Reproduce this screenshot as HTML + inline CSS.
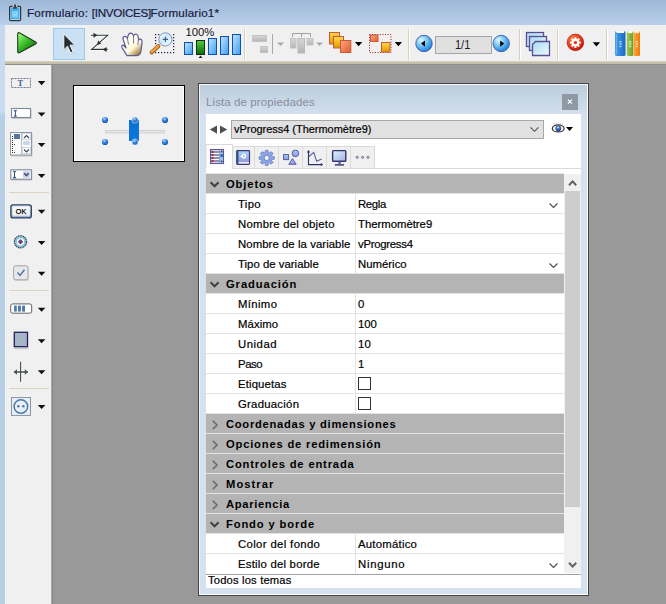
<!DOCTYPE html>
<html><head><meta charset="utf-8">
<style>
*{margin:0;padding:0;box-sizing:border-box}
html,body{width:666px;height:604px;overflow:hidden;background:#999;font-family:"Liberation Sans",sans-serif;position:relative}
.a{position:absolute}
.lbl,.val,#status,#combotext,#ttext{-webkit-text-stroke:0.2px currentColor}
svg{position:absolute;overflow:visible}
#title{left:0;top:0;width:666px;height:25px;background:linear-gradient(#9db7d6,#b9cfe9)}
#ttext{left:27px;top:6px;letter-spacing:0.05px;font-size:11.65px;color:#1a1a40;white-space:nowrap;line-height:14px}
#lstrip{left:0;top:25px;width:5px;height:579px;background:linear-gradient(#c4d8ee,#cadcf0 85px,#b8cfe8 92px,#b8cfe8)}
#tb{left:5px;top:25px;width:661px;height:36px;background:#f0f0f0}
#sepband{left:5px;top:61px;width:661px;height:4px;background:linear-gradient(#d6d2c0 0,#d6d2c0 1px,#c6c2ae 1px,#c0bca8 3px,#8e8e86 3px)}
#lpanel{left:5px;top:65px;width:46px;height:539px;background:#f0f0f0}
#ledge1{left:51px;top:65px;width:1px;height:539px;background:#aaa}
#ledge2{left:52px;top:65px;width:1px;height:539px;background:#888}
.vsep{width:2px;height:31px;top:29px;background:linear-gradient(90deg,#d9d1b9 50%,#fff 50%)}
.hsep{left:9px;width:40px;height:1px;background:#ddd6c0}
.dd{width:0;height:0;border-left:4px solid transparent;border-right:4px solid transparent;border-top:4px solid #000}
#form{left:73px;top:85px;width:112px;height:77px;border:1px solid #000;background:#f0f0f0;box-shadow:inset 0 0 0 1px #fff}
#win{left:198px;top:83px;width:391px;height:513px;border:1px solid #444;background:#d3e0ef}
#winin{left:199px;top:84px;width:389px;height:511px;border:1px solid #f4f7fb;border-right-color:#fff;border-bottom-color:#fff;background:linear-gradient(#bccddc,#d4e1ef 31px,#d4e1ef)}
#wtitle{left:206px;top:95px;letter-spacing:0.08px;font-size:11.55px;color:#8a8d9c;white-space:nowrap;line-height:14px}
#close{left:562px;top:94px;width:16px;height:16px;background:#8e99a4}
#content{left:206px;top:114px;width:375px;height:474px;background:#fff}
#combo{left:231px;top:120px;width:313px;height:19px;border:1px solid #a6a6a6;background:#e1e1e1}
#combotext{left:234px;top:122px;font-size:10.95px;color:#000;white-space:nowrap;line-height:14px}
.tab{top:146px;width:24px;height:23px;background:#f0f0f0;border:1px solid #dadada;border-bottom:none;border-left:none}
.row{left:206px;width:358px;height:20px;border-top:1px solid #e3e3e3;background:#fff}
.hdr{background:#b4b4b4}
.lbl{position:absolute;left:32px;top:3px;font-size:11.35px;color:#000;white-space:nowrap;line-height:14px}
.val{position:absolute;left:152px;top:3px;font-size:11.35px;color:#000;white-space:nowrap;line-height:14px}
.htxt{position:absolute;left:20px;top:3px;letter-spacing:0.68px;font-size:11.2px;font-weight:bold;color:#000;white-space:nowrap;line-height:14px}
.div{position:absolute;left:149px;top:-1px;width:1px;height:20px;background:#e3e3e3}
.cb{position:absolute;left:152px;top:3px;width:13px;height:13px;border:1px solid #333;background:#fff}
#sb{left:564px;top:174px;width:17px;height:399px;background:#f0f0f0}
#thumb{left:565px;top:191px;width:15px;height:316px;background:#cdcdcd}
#botline{left:206px;top:574px;width:375px;height:1px;background:#a0a0a0}
#status{left:208px;top:573px;letter-spacing:0.18px;font-size:11.2px;color:#000;white-space:nowrap;line-height:14px}
</style></head><body>
<div class="a" id="title"></div>
<div class="a" id="ttext"><span class="a" id="tt1" style="left:0px;letter-spacing:0.2px">Formulario:</span><span class="a" id="tt2" style="left:64.8px;letter-spacing:-0.3px">[INVOICES]</span><span class="a" id="tt3" style="left:123.4px;letter-spacing:0.18px">Formulario1*</span></div>
<div class="a" id="lstrip"></div>
<div class="a" id="tb"></div>
<div class="a" id="sepband"></div>
<!--TOOLBAR-->
<svg width="666" height="65" style="left:0;top:0">
<defs>
<linearGradient id="gPlay" x1="0" y1="0.1" x2="0.7" y2="1"><stop offset="0" stop-color="#9cff70"/><stop offset="0.5" stop-color="#3cbc2c"/><stop offset="1" stop-color="#0e6410"/></linearGradient>
<linearGradient id="gBar" x1="0" y1="0" x2="1" y2="1"><stop offset="0" stop-color="#c4e6ff"/><stop offset="1" stop-color="#3a9ef0"/></linearGradient>
<linearGradient id="gGreen" x1="0" y1="0" x2="0" y2="1"><stop offset="0" stop-color="#50d040"/><stop offset="1" stop-color="#0a6a0a"/></linearGradient>
<linearGradient id="gGray" x1="0" y1="0" x2="0" y2="1"><stop offset="0" stop-color="#d8d8d8"/><stop offset="1" stop-color="#b4b4b4"/></linearGradient>
<linearGradient id="gYel" x1="0" y1="0" x2="0" y2="1"><stop offset="0" stop-color="#ffd84a"/><stop offset="1" stop-color="#e09a00"/></linearGradient>
<linearGradient id="gOra" x1="0" y1="0" x2="1" y2="1"><stop offset="0" stop-color="#ffa880"/><stop offset="1" stop-color="#e05a30"/></linearGradient>
<radialGradient id="gNav" cx="0.35" cy="0.3" r="0.75"><stop offset="0" stop-color="#e6f8ff"/><stop offset="0.5" stop-color="#6cc0f0"/><stop offset="1" stop-color="#1a78d8"/></radialGradient>
<radialGradient id="gRed" cx="0.35" cy="0.3" r="0.8"><stop offset="0" stop-color="#ff8040"/><stop offset="0.6" stop-color="#e03a1a"/><stop offset="1" stop-color="#b80808"/></radialGradient>
<linearGradient id="gPage" x1="0" y1="0" x2="1" y2="1"><stop offset="0" stop-color="#a8d8f4"/><stop offset="1" stop-color="#effaff"/></linearGradient>
<linearGradient id="gLens" x1="0" y1="0" x2="1" y2="1"><stop offset="0" stop-color="#ffffff"/><stop offset="0.4" stop-color="#c4ecfc"/><stop offset="1" stop-color="#f0fbff"/></linearGradient>
<linearGradient id="gHand" x1="0.3" y1="0.3" x2="0.85" y2="1"><stop offset="0" stop-color="#fffeee"/><stop offset="0.5" stop-color="#fff8dc"/><stop offset="1" stop-color="#946818"/></linearGradient>
<linearGradient id="gBlueBook" x1="0" y1="0" x2="1" y2="0"><stop offset="0" stop-color="#4aa0ea"/><stop offset="1" stop-color="#1868c4"/></linearGradient>
</defs>
<!-- title icon -->
<g>
<path d="M12.6 6.3 H10.6 Q9.6 6.3 9.6 7.3 V19.6 Q9.6 20.6 10.6 20.6 H19.6 Q20.6 20.6 20.6 19.6 V7.3 Q20.6 6.3 19.6 6.3 H17.4" fill="none" stroke="#363636" stroke-width="1.2"/>
<rect x="10.8" y="8" width="8.4" height="11" fill="#41b2ee"/>
<rect x="12" y="11" width="6" height="6.5" fill="#78cff7"/>
<path d="M13 14.5 L14.5 16 L17.5 12.5" fill="none" stroke="#c8ecff" stroke-width="0.9" stroke-dasharray="1 0.6"/>
<rect x="14.2" y="4.5" width="1.8" height="3" fill="#363636"/>
<rect x="13" y="7.2" width="4.2" height="1.4" fill="#363636"/>
</g>
<!-- play -->
<path d="M17.7 34.2 Q17.7 31.9 19.8 33 L35.6 41.9 Q37.3 42.9 35.6 43.9 L19.8 52.6 Q17.7 53.7 17.7 51.4 Z" fill="url(#gPlay)" stroke="#1c3c1c" stroke-width="1.1" stroke-linejoin="round"/>
<!-- selected button -->
<rect x="53.5" y="28.5" width="31" height="31" fill="#c9e0f5" stroke="#9ccaf2" stroke-width="1"/>
<!-- arrow cursor -->
<path d="M64.6 35 L64.6 50.8 L68.2 47.2 L71.2 53.8 L73.6 52.8 L70.6 46.2 L75.4 46.2 Z" fill="#9aa8b4" opacity="0.6"/><path d="M63.8 34 L63.8 49.8 L67.5 46.2 L70.5 52.8 L73 51.7 L70 45.2 L74.8 45.2 Z" fill="#262c30" stroke="#f8f8f8" stroke-width="1" stroke-linejoin="round"/>
<!-- Z icon -->
<g stroke="#ffffff" stroke-width="2.6" fill="none" opacity="0.9">
<path d="M91 35.3 H107.6 L91.6 49.4 H107.6"/>
</g>
<g fill="none" stroke="#2b3434" stroke-width="1.1">
<path d="M91 35.3 H107.6 L91.6 49.4 H107.6"/>
</g>
<g fill="#2b3434">
<path d="M93.5 32.8 L97.5 35.3 L93.5 37.8 Z"/>
<path d="M106.6 46.9 L102.6 49.4 L106.6 51.9 Z"/>
<path d="M96.8 45.2 L98.2 40.6 L101.3 43.6 Z"/>
</g>
<!-- hand -->
<path d="M127 55.6 L122 47.6 Q121 45.2 123.4 45.2 L126 48 L123 39 Q122.6 36.3 125.2 36.4 Q126.6 36.6 127.4 38.4 L128.2 35.2 Q129 33 131 33.2 Q132.8 33.4 133.2 35.4 L133.8 35.4 Q134.6 33.8 136.4 34.2 Q138.2 34.8 138.2 37 L138.6 40 Q139.6 38.8 141 39.4 Q142.3 40 142 42.5 L141 51 Q140.4 55.6 137 55.6 Z" fill="url(#gHand)" stroke="#5c5c9c" stroke-width="1.2" stroke-linejoin="round"/>
<path d="M127.4 38.6 L128.6 44.6 M133.5 35.6 L133.6 43.6 M138.4 39.8 L137.8 45" fill="none" stroke="#6a68a8" stroke-width="0.9"/>
<!-- zoom -->
<g fill="#1a1a50">
<rect x="155" y="34" width="1.2" height="1.2"/><rect x="158" y="34" width="1.2" height="1.2"/><rect x="173" y="34" width="1.2" height="1.2"/>
<rect x="155" y="37" width="1.2" height="1.2"/><rect x="155" y="40" width="1.2" height="1.2"/><rect x="155" y="43" width="1.2" height="1.2"/>
<rect x="155" y="52" width="1.2" height="1.2"/><rect x="158" y="52" width="1.2" height="1.2"/><rect x="161" y="52" width="1.2" height="1.2"/><rect x="164" y="52" width="1.2" height="1.2"/><rect x="167" y="52" width="1.2" height="1.2"/><rect x="170" y="52" width="1.2" height="1.2"/><rect x="173" y="52" width="1.2" height="1.2"/>
<rect x="173" y="37" width="1.2" height="1.2"/><rect x="173" y="40" width="1.2" height="1.2"/><rect x="173" y="43" width="1.2" height="1.2"/><rect x="173" y="46" width="1.2" height="1.2"/><rect x="173" y="49" width="1.2" height="1.2"/>
</g>
<path d="M151.5 52.5 L158.5 46" stroke="#7a5020" stroke-width="3.8" stroke-linecap="round"/>
<path d="M151.5 52.2 L158.3 46" stroke="#f5a030" stroke-width="2.6" stroke-linecap="round"/>
<circle cx="165.4" cy="39.4" r="6.6" fill="url(#gLens)" stroke="#8a8ec4" stroke-width="1"/>
<path d="M162.8 39.4 H168 M165.4 36.8 V42" stroke="#505084" stroke-width="1.1"/>
<!-- 100% -->
<text x="185.5" y="36" font-family="Liberation Sans" font-size="11.3" fill="#111">100%</text>
<g stroke="#0c50b0" stroke-width="1">
<rect x="184.5" y="42.5" width="8" height="12" fill="url(#gBar)"/>
<rect x="208.5" y="38.5" width="8" height="16" fill="url(#gBar)"/>
<rect x="220.5" y="36.5" width="8" height="18" fill="url(#gBar)"/>
<rect x="232.5" y="34.5" width="8" height="20" fill="url(#gBar)"/>
</g>
<rect x="196.5" y="40.5" width="8" height="14" fill="url(#gGreen)" stroke="#1a2a1a" stroke-width="1"/>
<path d="M198.5 58 L200.5 55.5 L202.5 58 Z" fill="#222"/>
<!-- separators -->
<rect x="244" y="29" width="1" height="31" fill="#d8d0b8"/><rect x="245" y="29" width="1" height="31" fill="#fff"/>
<rect x="408" y="29" width="1" height="31" fill="#d8d0b8"/><rect x="409" y="29" width="1" height="31" fill="#fff"/>
<rect x="519" y="29" width="1" height="31" fill="#d8d0b8"/><rect x="520" y="29" width="1" height="31" fill="#fff"/>
<rect x="557" y="29" width="1" height="31" fill="#d8d0b8"/><rect x="558" y="29" width="1" height="31" fill="#fff"/>
<rect x="606" y="29" width="1" height="31" fill="#d8d0b8"/><rect x="607" y="29" width="1" height="31" fill="#fff"/>
<!-- align (disabled) -->
<rect x="252.5" y="35.5" width="14" height="6" fill="url(#gGray)" stroke="#c4c4c4"/>
<rect x="260.5" y="46.5" width="7" height="6" fill="url(#gGray)" stroke="#c4c4c4"/>
<rect x="272" y="34" width="1" height="20" fill="#a8a8a8"/>
<path d="M277 42.5 H284 L280.5 46 Z" fill="#a8a8a8"/>
<path d="M292.5 37 V33.5 H310.5 V37 M301.5 33.5 V37" fill="none" stroke="#a0a0a0" stroke-width="1"/>
<rect x="290.5" y="38.5" width="5.5" height="9.5" fill="url(#gGray)" stroke="#c4c4c4"/>
<rect x="298" y="38.5" width="6.5" height="14.5" fill="url(#gGray)" stroke="#b8b8b8"/>
<rect x="307" y="38.5" width="6" height="6.5" fill="url(#gGray)" stroke="#c4c4c4"/>
<path d="M316 42.5 H323 L319.5 46 Z" fill="#a8a8a8"/>
<!-- layers -->
<rect x="329.5" y="32.5" width="10" height="11.5" fill="url(#gYel)" stroke="#c85a3a"/>
<rect x="333.5" y="36.5" width="10" height="11.5" fill="url(#gYel)" stroke="#c85a3a"/>
<rect x="340.5" y="40.5" width="10.3" height="12" fill="url(#gOra)" stroke="#c85a3a"/>
<path d="M355 42 H362.3 L358.65 46.2 Z" fill="#000"/>
<rect x="369.5" y="34.5" width="21.5" height="18" fill="none" stroke="#a01818" stroke-width="1" stroke-dasharray="1 1.6"/>
<rect x="370.5" y="35" width="7.5" height="6.5" fill="url(#gOra)" stroke="#c85a3a"/>
<rect x="381.5" y="42.5" width="8.5" height="9.5" fill="url(#gYel)" stroke="#c85a3a"/>
<path d="M394.8 42 H402 L398.4 46.2 Z" fill="#000"/>
<!-- nav -->
<circle cx="424" cy="43.5" r="8.2" fill="url(#gNav)" stroke="#3a5aa8" stroke-width="0.9"/>
<path d="M421 43.6 L425 40.5 L425 46.7 Z" fill="#000"/>
<rect x="435.5" y="36.5" width="56" height="17" fill="#e0e0e0" stroke="#a6a6a6"/>
<text x="455" y="49.2" font-family="Liberation Sans" font-size="13.2" fill="#1a1a2a" textLength="15.3" lengthAdjust="spacingAndGlyphs">1/1</text>
<circle cx="501.2" cy="43.5" r="8.2" fill="url(#gNav)" stroke="#3a5aa8" stroke-width="0.9"/>
<path d="M504.2 43.6 L500.2 40.5 L500.2 46.7 Z" fill="#000"/>
<!-- pages -->
<g stroke="#5a4e90" stroke-width="1.3" fill="url(#gPage)">
<rect x="526.5" y="32.5" width="17" height="14"/>
<rect x="529.5" y="36.5" width="17" height="14"/>
<path d="M532.5 44.5 L535.5 41.5 H549.5 V55.5 H532.5 Z"/>
</g>
<!-- red gear -->
<circle cx="575.4" cy="42.4" r="8.3" fill="url(#gRed)" stroke="#a80a0a" stroke-width="0.6"/>
<g fill="#fff" transform="translate(575.4 42.6)">
<circle r="3.8"/>
<rect x="-1" y="-5.4" width="2" height="10.8"/>
<rect x="-1" y="-5.4" width="2" height="10.8" transform="rotate(45)"/>
<rect x="-1" y="-5.4" width="2" height="10.8" transform="rotate(90)"/>
<rect x="-1" y="-5.4" width="2" height="10.8" transform="rotate(135)"/>
</g>
<circle cx="575.4" cy="42.6" r="1.7" fill="#e03a1a"/>
<path d="M592.7 42.3 H600.1 L596.4 46.6 Z" fill="#000"/>
<!-- books -->
<linearGradient id="gGrnBook" x1="0" y1="0" x2="1" y2="0"><stop offset="0" stop-color="#9ccc50"/><stop offset="1" stop-color="#6a9e28"/></linearGradient>
<linearGradient id="gOrBook" x1="0" y1="0" x2="1" y2="0"><stop offset="0" stop-color="#ffa838"/><stop offset="1" stop-color="#ee7a08"/></linearGradient>
<path d="M615 33 L615.8 31 L617.5 33 H623 L624.7 31 L625.5 33 V54.5 Q625.5 56 624 56 H616.5 Q615 56 615 54.5 Z" fill="url(#gBlueBook)"/>
<rect x="616.6" y="31" width="7.4" height="2" fill="#f4f8ff"/>
<path d="M616.5 34 V54" stroke="#8cc8ff" stroke-width="0.8" opacity="0.7"/>
<rect x="619.3" y="41" width="2.4" height="1.4" fill="#a8d0f4"/><rect x="619.3" y="43.4" width="2.4" height="1.4" fill="#a8d0f4"/><rect x="619.3" y="45.8" width="2.4" height="1.4" fill="#a8d0f4"/>
<path d="M626.8 33 L627.4 31 L628.6 33 H631.6 L632.8 31 L633.3 33 V55 Q633.3 56 632 56 H628 Q626.8 56 626.8 55 Z" fill="url(#gGrnBook)"/>
<rect x="628" y="31" width="4.4" height="2.2" fill="#f6ffe8"/>
<rect x="629" y="41" width="2.4" height="1.4" fill="#d0ecb0"/><rect x="629" y="43.4" width="2.4" height="1.4" fill="#d0ecb0"/><rect x="629" y="45.8" width="2.4" height="1.4" fill="#d0ecb0"/>
<path d="M633.5 33 L634.1 31 L635.3 33 H638.4 L639.5 31 L640 33 V55 Q640 56 638.8 56 H634.8 Q633.5 56 633.5 55 Z" fill="url(#gOrBook)"/>
<rect x="634.7" y="31" width="4.4" height="2.2" fill="#fff4e0"/>
<rect x="635.6" y="41" width="2.4" height="1.4" fill="#ffd0a0"/><rect x="635.6" y="43.4" width="2.4" height="1.4" fill="#ffd0a0"/><rect x="635.6" y="45.8" width="2.4" height="1.4" fill="#ffd0a0"/>
</svg>
<!--/TOOLBAR-->
<div class="a" id="lpanel"></div>
<div class="a" id="ledge1"></div>
<div class="a" id="ledge2"></div>
<!--LEFT-->
<svg width="60" height="430" style="left:0;top:0">
<defs>
<linearGradient id="gOK" x1="0" y1="0" x2="0" y2="1"><stop offset="0" stop-color="#dfe8f6"/><stop offset="1" stop-color="#9eb0d0"/></linearGradient>
</defs>
<!-- arrows -->
<g fill="#111">
<path d="M37.8 81 H45.4 L41.6 85.2 Z"/>
<path d="M37.8 112.5 H45.4 L41.6 116.5 Z"/>
<path d="M37.8 143 H45.4 L41.6 147 Z"/>
<path d="M37.8 174 H45.4 L41.6 178 Z"/>
<path d="M37.8 209.7 H45.4 L41.6 213.7 Z"/>
<path d="M37.8 241 H45.4 L41.6 245 Z"/>
<path d="M37.8 271.8 H45.4 L41.6 275.8 Z"/>
<path d="M37.8 307.7 H45.4 L41.6 311.7 Z"/>
<path d="M37.8 339.3 H45.4 L41.6 343.3 Z"/>
<path d="M37.8 370.2 H45.4 L41.6 374.2 Z"/>
<path d="M37.8 405 H45.4 L41.6 409 Z"/>
</g>
<!-- separators -->
<rect x="9" y="192" width="40" height="1" fill="#dcd4bf"/>
<rect x="9" y="290" width="40" height="1" fill="#dcd4bf"/>
<rect x="9" y="388" width="40" height="1" fill="#dcd4bf"/>
<!-- T icon -->
<rect x="11.5" y="78.5" width="19" height="9" fill="none" stroke="#6e7a8c" stroke-width="1" stroke-dasharray="2 1"/>
<text x="17.6" y="85.8" font-family="Liberation Serif" font-weight="bold" font-size="8.4" fill="#4a5c90">T</text>
<!-- input -->
<rect x="12" y="109.5" width="19.5" height="9.5" fill="#c8c8c8"/><rect x="11.5" y="108.5" width="19" height="9" fill="#fff" stroke="#7d8a9a" stroke-width="1.1"/>
<path d="M14 110.4 Q15.4 110.4 15.4 111.4 V115.2 Q15.4 116.2 14 116.2 M16.8 110.4 Q15.4 110.4 15.4 111.4 M16.8 116.2 Q15.4 116.2 15.4 115.2" fill="none" stroke="#3d5a98" stroke-width="1.1"/>
<!-- list -->
<rect x="11" y="133.5" width="21.5" height="23" fill="#c4c4c4"/><rect x="10.5" y="132.5" width="21" height="22.5" fill="#fafafa" stroke="#8a98a8" stroke-width="1"/>
<rect x="21" y="133" width="1" height="22" fill="#b8c0cc"/>
<rect x="14" y="134" width="6" height="5" fill="#5a74a0"/>
<g fill="#333"><rect x="12" y="136" width="1" height="1"/><rect x="12" y="138" width="1" height="1"/><rect x="12" y="140" width="1" height="1"/><rect x="12" y="142" width="1" height="1"/><rect x="12" y="144" width="1" height="1"/><rect x="14" y="144" width="1" height="1"/><rect x="12" y="146" width="1" height="1"/><rect x="12" y="148" width="1" height="1"/><rect x="12" y="150" width="1" height="1"/><rect x="12" y="152" width="1" height="1"/><rect x="14" y="152" width="1" height="1"/></g>
<rect x="22.5" y="133.5" width="8" height="6" fill="#fff" stroke="#c8d0e0" stroke-width="0.8"/>
<path d="M24 138 L26.5 135.5 L29 138" fill="none" stroke="#404858" stroke-width="1.2"/>
<rect x="23" y="141" width="7" height="4" rx="1.5" fill="#c8d4ea"/>
<rect x="22.5" y="147.5" width="8" height="6" fill="#fff" stroke="#c8d0e0" stroke-width="0.8"/>
<path d="M24 149.5 L26.5 152 L29 149.5" fill="none" stroke="#404858" stroke-width="1.2"/>
<!-- combo -->
<rect x="11.3" y="170.8" width="21" height="9.8" fill="#c8c8c8"/><rect x="10.8" y="169.8" width="20.6" height="9.4" fill="#fff" stroke="#7d8a9a" stroke-width="1.1"/>
<path d="M12.9 171.3 Q14.5 171.3 14.5 172.6 V176.5 Q14.5 177.8 12.9 177.8 M16.1 171.3 Q14.5 171.3 14.5 172.6 M16.1 177.8 Q14.5 177.8 14.5 176.5" fill="none" stroke="#3d5080" stroke-width="1.1"/>
<rect x="23" y="171.3" width="6.8" height="6.4" rx="1" fill="#c6cfe6"/>
<path d="M24.2 173.2 L26.4 175.6 L28.6 173.2" fill="none" stroke="#303c60" stroke-width="1.3"/>
<!-- OK -->
<rect x="10.9" y="204.9" width="20.4" height="13" rx="2.2" fill="url(#gOK)" stroke="#26405e" stroke-width="1.3"/>
<rect x="12.6" y="206.6" width="17" height="9" fill="#f8f8f8"/>
<text x="15.8" y="214" font-family="Liberation Sans" font-size="7.2" fill="#000" stroke="#000" stroke-width="0.25">OK</text>
<!-- radio -->
<circle cx="20.5" cy="241.8" r="6.1" fill="#88c4d6" stroke="#2a3e50" stroke-width="1.2" stroke-dasharray="1.2 0.6"/>
<circle cx="20.5" cy="241.8" r="3.6" fill="#fff"/>
<path d="M20.5 239.1 L23.2 241.8 L20.5 244.5 L17.8 241.8 Z" fill="#6c3c90"/>
<!-- checkbox -->
<rect x="14.2" y="266.8" width="14.4" height="14" rx="1.8" fill="#cfcfcf"/><rect x="13.6" y="265.8" width="14.4" height="14" rx="1.8" fill="#e8e8e8" stroke="#a4a4a4" stroke-width="1"/>
<path d="M17.5 272.5 L20 275.5 L24.5 269.8" fill="none" stroke="#4a72a4" stroke-width="1.4"/>
<!-- progress -->
<rect x="10.7" y="303.9" width="21" height="9.3" rx="2" fill="#fff" stroke="#606060" stroke-width="1"/>
<rect x="14.1" y="305.6" width="2.7" height="6" fill="#4a7aa8"/>
<rect x="18" y="305.6" width="2.9" height="6" fill="#4a7aa8"/>
<rect x="22.1" y="305.6" width="2.9" height="6" fill="#4a7aa8"/>
<!-- rect -->
<rect x="14.4" y="348" width="14" height="1.2" fill="#c8c8c8"/>
<rect x="14.3" y="332.3" width="13.2" height="14.4" fill="#a8b4c8" stroke="#20205a" stroke-width="1.3"/>
<!-- splitter -->
<path d="M14 372 H27.8" stroke="#fff" stroke-width="3.2"/>
<rect x="20" y="361.8" width="1.1" height="20" fill="#4a5454"/>
<path d="M14 372 H27.8" stroke="#4a5454" stroke-width="1.6"/>
<path d="M13.6 372 L17 369.2 L17 374.8 Z M28.2 372 L24.8 369.2 L24.8 374.8 Z" fill="#4a5454"/>
<!-- plugin -->
<rect x="11.5" y="397.5" width="19" height="18" fill="#e8eef4" stroke="#8898a8" stroke-width="1"/>
<circle cx="20.9" cy="406.5" r="6.8" fill="none" stroke="#4a78a8" stroke-width="1.5"/>
<circle cx="18.4" cy="406.3" r="1.2" fill="#4a78a8"/>
<circle cx="23.4" cy="406.3" r="1.2" fill="#4a78a8"/>
</svg>
<!--/LEFT-->

<!-- form preview -->
<div class="a" id="form"></div>
<!--FORM-->
<svg width="120" height="80" style="left:70px;top:84px">
<defs>
<radialGradient id="gDot" cx="0.4" cy="0.3" r="0.7"><stop offset="0" stop-color="#b8dcff"/><stop offset="0.45" stop-color="#3a88e0"/><stop offset="1" stop-color="#1050b0"/></radialGradient>
</defs>
<g transform="translate(-70 -84)">
<rect x="105.5" y="130.5" width="59" height="2.4" fill="#e6e6e6" stroke="#d0d0d0" stroke-width="1"/>
<rect x="129" y="120" width="10" height="21" fill="#0a74d8"/>
<g fill="url(#gDot)">
<circle cx="105" cy="120" r="3.1"/><circle cx="135" cy="120" r="3.1" stroke="#e0ecf8" stroke-width="0.6"/><circle cx="165" cy="120" r="3.1"/>
<circle cx="105" cy="142" r="3.1"/><circle cx="135" cy="142" r="3.1" stroke="#e0ecf8" stroke-width="0.6"/><circle cx="165" cy="142" r="3.1"/>
</g>
</g>
</svg>
<!--/FORM-->

<!-- properties window -->
<div class="a" id="win"></div>
<div class="a" id="winin"></div>
<div class="a" id="wtitle">Lista de propiedades</div>
<div class="a" id="close"></div>
<div class="a" id="content"></div>
<div class="a" id="combo"></div>
<!--WIN-->
<svg width="666" height="604" style="left:0;top:0">
<defs>
<linearGradient id="gBook" x1="0" y1="0" x2="0" y2="1"><stop offset="0" stop-color="#a4d6ff"/><stop offset="1" stop-color="#9090d0"/></linearGradient>
<linearGradient id="gScr" x1="0" y1="0" x2="1" y2="1"><stop offset="0" stop-color="#d8f4ff"/><stop offset="1" stop-color="#a8b0e0"/></linearGradient>
<linearGradient id="gShape" x1="0" y1="0" x2="0" y2="1"><stop offset="0" stop-color="#a8d0ff"/><stop offset="1" stop-color="#8898e0"/></linearGradient>
<radialGradient id="gIris" cx="0.45" cy="0.35" r="0.6"><stop offset="0" stop-color="#6aaaf0"/><stop offset="1" stop-color="#0a3a98"/></radialGradient>
</defs>
<!-- nav arrows -->
<path d="M209.8 129.6 L217 125.4 V133.8 Z" fill="#505050"/>
<path d="M227.2 129.6 L220 125.4 V133.8 Z" fill="#505050"/>
<!-- combo chevron -->
<path d="M530.5 127.3 L534.5 131.3 L538.5 127.3" fill="none" stroke="#505050" stroke-width="1.1"/>
<!-- close x -->
<path d="M567.9 99.6 L571.9 103.6 M571.9 99.6 L567.9 103.6" stroke="#fff" stroke-width="1.2"/>
<!-- eye -->
<g stroke="#c4c4cc" stroke-width="0.7"><path d="M554.6 125 L554 123 M556.4 124.4 L556.1 122.4 M558.3 124.2 V122.2 M560.2 124.4 L560.5 122.4 M562 125 L562.6 123"/></g>
<ellipse cx="558.2" cy="128.4" rx="5.9" ry="3.5" fill="#f8f0e0" stroke="#34343e" stroke-width="1.2"/>
<circle cx="558.3" cy="128.4" r="2.8" fill="url(#gIris)"/>
<circle cx="558.1" cy="127.5" r="0.7" fill="#fff"/>
<path d="M566 127 H573 L569.5 131 Z" fill="#000"/>
<!-- tabs -->
<rect x="232.5" y="146.5" width="22" height="22" fill="#f0f0f0" stroke="#dadada"/>
<rect x="254.5" y="146.5" width="24" height="22" fill="#f0f0f0" stroke="#dadada"/>
<rect x="278.5" y="146.5" width="24" height="22" fill="#f0f0f0" stroke="#dadada"/>
<rect x="302.5" y="146.5" width="24" height="22" fill="#f0f0f0" stroke="#dadada"/>
<rect x="326.5" y="146.5" width="24" height="22" fill="#f0f0f0" stroke="#dadada"/>
<rect x="350.5" y="146.5" width="24" height="22" fill="#f0f0f0" stroke="#dadada"/>
<rect x="374" y="168" width="207" height="1" fill="#dadada"/>
<path d="M206 169 V144.5 H232.5 V169" fill="#fff" stroke="#dadada"/>
<rect x="206" y="168" width="26" height="2" fill="#fff"/>
<!-- list icon -->
<rect x="210.6" y="149.6" width="12.8" height="13.8" fill="#fff" stroke="#5a5a98" stroke-width="1.3"/>
<g fill="#5e5e9c"><rect x="211" y="151.3" width="9" height="1.4"/><rect x="211" y="154.3" width="9" height="1.4"/><rect x="211" y="157.3" width="9" height="1.4"/><rect x="211" y="160.3" width="9" height="1.4"/></g>
<rect x="219.8" y="150.2" width="3.2" height="12.6" fill="#a8c4f0"/>
<rect x="219.4" y="150" width="0.9" height="13" fill="#8a9aa8"/>
<rect x="220.4" y="154.2" width="2.6" height="2.8" fill="#2a6ab8"/>
<path d="M220.3 152.2 L221.7 150.5 L223.1 152.2 Z M220.3 160.8 L221.7 162.5 L223.1 160.8 Z" fill="#2a2a6a"/>
<g fill="#c41010"><circle cx="212.6" cy="152" r="1"/><circle cx="212.6" cy="155" r="1"/><circle cx="212.6" cy="158" r="1"/><circle cx="212.6" cy="161" r="1"/></g>
<!-- book -->
<rect x="236.8" y="150.7" width="12.7" height="13.7" rx="0.8" fill="url(#gBook)" stroke="#3a3a78" stroke-width="1.2"/>
<rect x="236.3" y="151" width="2.2" height="13.2" fill="#3a5286"/>
<rect x="238.6" y="162.2" width="10.4" height="1.3" fill="#fff"/>
<path d="M240.4 156.4 H242.3" stroke="#fff" stroke-width="1.3"/>
<ellipse cx="243.9" cy="156.1" rx="1.5" ry="2" fill="none" stroke="#fff" stroke-width="1.4"/>
<!-- gear -->
<g transform="translate(266.7 157.9)">
<g fill="#8aa4e4" stroke="#6674bc" stroke-width="0.8"><rect x="-1.5" y="-7.6" width="3" height="4" rx="0.6" transform="rotate(0)"/><rect x="-1.5" y="-7.6" width="3" height="4" rx="0.6" transform="rotate(45)"/><rect x="-1.5" y="-7.6" width="3" height="4" rx="0.6" transform="rotate(90)"/><rect x="-1.5" y="-7.6" width="3" height="4" rx="0.6" transform="rotate(135)"/><rect x="-1.5" y="-7.6" width="3" height="4" rx="0.6" transform="rotate(180)"/><rect x="-1.5" y="-7.6" width="3" height="4" rx="0.6" transform="rotate(225)"/><rect x="-1.5" y="-7.6" width="3" height="4" rx="0.6" transform="rotate(270)"/><rect x="-1.5" y="-7.6" width="3" height="4" rx="0.6" transform="rotate(315)"/></g>
<circle r="5.4" fill="#8aa4e4" stroke="#6674bc" stroke-width="0.6"/>
<g fill="#8aa4e4"><rect x="-1.5" y="-6.8" width="3" height="3" rx="0.6" transform="rotate(0)"/><rect x="-1.5" y="-6.8" width="3" height="3" rx="0.6" transform="rotate(45)"/><rect x="-1.5" y="-6.8" width="3" height="3" rx="0.6" transform="rotate(90)"/><rect x="-1.5" y="-6.8" width="3" height="3" rx="0.6" transform="rotate(135)"/><rect x="-1.5" y="-6.8" width="3" height="3" rx="0.6" transform="rotate(180)"/><rect x="-1.5" y="-6.8" width="3" height="3" rx="0.6" transform="rotate(225)"/><rect x="-1.5" y="-6.8" width="3" height="3" rx="0.6" transform="rotate(270)"/><rect x="-1.5" y="-6.8" width="3" height="3" rx="0.6" transform="rotate(315)"/></g>
<circle r="2.6" fill="#f6f6f6" stroke="#6674bc" stroke-width="0.9"/>
</g>
<!-- shapes -->
<g fill="url(#gShape)" stroke="#5a5aa0" stroke-width="1">
<rect x="283.6" y="154.6" width="5" height="5"/>
<circle cx="295.4" cy="153.4" r="3.3"/>
<path d="M292.5 158.6 L296.2 164.3 H288.8 Z"/>
</g>
<!-- chart -->
<g stroke="#2e2e6e" stroke-width="1.1" fill="none"><path d="M308.5 151 V164.6 H322"/></g>
<path d="M306.8 152.5 L308.5 150 L310.2 152.5 Z M320.8 162.9 L323.2 164.6 L320.8 166.3 Z" fill="#2e2e6e"/>
<path d="M309 156.5 L313.8 152.4 L316.6 161.3 L321.6 159" fill="none" stroke="#5a5a9a" stroke-width="1.1"/>
<!-- monitor -->
<rect x="332.6" y="150.6" width="13.2" height="10.6" rx="0.8" fill="url(#gScr)" stroke="#34346e" stroke-width="1.4"/>
<rect x="338.4" y="161.6" width="2.4" height="2.6" fill="#5a6aa8"/>
<rect x="334.8" y="164.2" width="9.2" height="1.4" fill="#34346e"/>
<!-- dots -->
<g fill="#c8c8d8" stroke="#606080" stroke-width="0.8"><circle cx="357.2" cy="157.3" r="1.1"/><circle cx="362.6" cy="157.3" r="1.1"/><circle cx="368" cy="157.3" r="1.1"/></g>
</svg>
<!--/WIN-->
<div class="a" id="combotext">vProgress4 (Thermomètre9)</div>

<div class="a row hdr" style="top:173px"><svg width="10" height="10" style="left:4px;top:7px"><path d="M0.6 1.3 L4.6 5.3 L8.6 1.3" fill="none" stroke="#404040" stroke-width="2"/></svg><span class="htxt" style="letter-spacing:0.897px">Objetos</span></div>
<div class="a row" style="top:193px"><div class="div"></div><span class="lbl" style="letter-spacing:0.333px">Tipo</span><span class="val" style="letter-spacing:-0.325px">Regla</span><svg width="10" height="6" style="left:343px;top:9px"><path d="M0.5 0.5 L4.5 4.5 L8.5 0.5" fill="none" stroke="#505050" stroke-width="1.2"/></svg></div>
<div class="a row" style="top:213px"><div class="div"></div><span class="lbl" style="letter-spacing:0.238px">Nombre del objeto</span><span class="val" style="letter-spacing:-0.017px">Thermomètre9</span></div>
<div class="a row" style="top:233px"><div class="div"></div><span class="lbl" style="letter-spacing:0.07px">Nombre de la variable</span><span class="val" style="letter-spacing:-0.267px">vProgress4</span></div>
<div class="a row" style="top:253px"><div class="div"></div><span class="lbl" style="letter-spacing:0.027px">Tipo de variable</span><span class="val" style="letter-spacing:0.014px">Numérico</span><svg width="10" height="6" style="left:343px;top:9px"><path d="M0.5 0.5 L4.5 4.5 L8.5 0.5" fill="none" stroke="#505050" stroke-width="1.2"/></svg></div>
<div class="a row hdr" style="top:273px"><svg width="10" height="10" style="left:4px;top:7px"><path d="M0.6 1.3 L4.6 5.3 L8.6 1.3" fill="none" stroke="#404040" stroke-width="2"/></svg><span class="htxt" style="letter-spacing:0.914px">Graduación</span></div>
<div class="a row" style="top:293px"><div class="div"></div><span class="lbl" style="letter-spacing:0.36px">Mínimo</span><span class="val" style="letter-spacing:0px">0</span></div>
<div class="a row" style="top:313px"><div class="div"></div><span class="lbl" style="letter-spacing:0.08px">Máximo</span><span class="val" style="letter-spacing:-0.05px">100</span></div>
<div class="a row" style="top:333px"><div class="div"></div><span class="lbl" style="letter-spacing:0.52px">Unidad</span><span class="val" style="letter-spacing:0.2px">10</span></div>
<div class="a row" style="top:353px"><div class="div"></div><span class="lbl" style="letter-spacing:-0.433px">Paso</span><span class="val" style="letter-spacing:0px">1</span></div>
<div class="a row" style="top:373px"><div class="div"></div><span class="lbl" style="letter-spacing:0.136px">Etiquetas</span><span class="val"></span><div class="cb"></div></div>
<div class="a row" style="top:393px"><div class="div"></div><span class="lbl" style="letter-spacing:0.255px">Graduación</span><span class="val"></span><div class="cb"></div></div>
<div class="a row hdr" style="top:413px"><svg width="10" height="10" style="left:6px;top:6px"><path d="M0.8 0.8 L5 5 L0.8 9.2" fill="none" stroke="#707070" stroke-width="1.7"/></svg><span class="htxt" style="letter-spacing:0.722px">Coordenadas y dimensiones</span></div>
<div class="a row hdr" style="top:433px"><svg width="10" height="10" style="left:6px;top:6px"><path d="M0.8 0.8 L5 5 L0.8 9.2" fill="none" stroke="#707070" stroke-width="1.7"/></svg><span class="htxt" style="letter-spacing:0.812px">Opciones de redimensión</span></div>
<div class="a row hdr" style="top:453px"><svg width="10" height="10" style="left:6px;top:6px"><path d="M0.8 0.8 L5 5 L0.8 9.2" fill="none" stroke="#707070" stroke-width="1.7"/></svg><span class="htxt" style="letter-spacing:0.838px">Controles de entrada</span></div>
<div class="a row hdr" style="top:473px"><svg width="10" height="10" style="left:6px;top:6px"><path d="M0.8 0.8 L5 5 L0.8 9.2" fill="none" stroke="#707070" stroke-width="1.7"/></svg><span class="htxt" style="letter-spacing:1.064px">Mostrar</span></div>
<div class="a row hdr" style="top:493px"><svg width="10" height="10" style="left:6px;top:6px"><path d="M0.8 0.8 L5 5 L0.8 9.2" fill="none" stroke="#707070" stroke-width="1.7"/></svg><span class="htxt" style="letter-spacing:0.668px">Apariencia</span></div>
<div class="a row hdr" style="top:513px"><svg width="10" height="10" style="left:4px;top:7px"><path d="M0.6 1.3 L4.6 5.3 L8.6 1.3" fill="none" stroke="#404040" stroke-width="2"/></svg><span class="htxt" style="letter-spacing:0.871px">Fondo y borde</span></div>
<div class="a row" style="top:533px"><div class="div"></div><span class="lbl" style="letter-spacing:0.357px">Color del fondo</span><span class="val" style="letter-spacing:0.234px">Automático</span></div>
<div class="a row" style="top:553px"><div class="div"></div><span class="lbl" style="letter-spacing:0.221px">Estilo del borde</span><span class="val" style="letter-spacing:0.717px">Ninguno</span><svg width="10" height="6" style="left:343px;top:9px"><path d="M0.5 0.5 L4.5 4.5 L8.5 0.5" fill="none" stroke="#505050" stroke-width="1.2"/></svg></div>
<div class="a" id="sb"></div>
<div class="a" id="thumb"></div>
<svg width="666" height="604" style="left:0;top:0"><path d="M569 185.2 L572.6 181.4 L576.2 185.2" fill="none" stroke="#606060" stroke-width="2"/><path d="M569 562.8 L572.6 566.6 L576.2 562.8" fill="none" stroke="#606060" stroke-width="2"/></svg>
<div class="a" id="botline"></div>
<div class="a" id="status">Todos los temas</div>
</body></html>
